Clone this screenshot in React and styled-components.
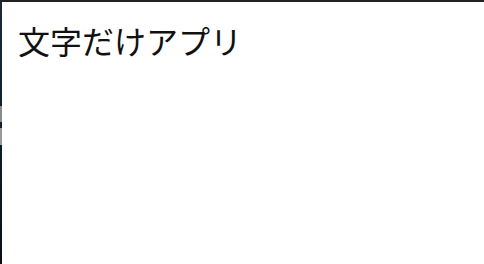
import React from "react";
import styled, { createGlobalStyle } from "styled-components";

const Global = createGlobalStyle`
  html, body { margin: 0; padding: 0; height: 100%; }
  body {
    background:
      linear-gradient(to bottom,
        transparent 0, transparent 106px,
        #8a8a8a 106px, #8a8a8a 122px,
        transparent 122px, transparent 128px,
        #9a9a9a 128px, #9a9a9a 145px,
        transparent 145px),
      linear-gradient(to bottom, #1c2a36 0%, #0d1f2e 50%, #0a0f14 100%);
    background-repeat: no-repeat;
    background-size: 2px 100%, 100% 100%;
    overflow: hidden;
  }
  #root { height: 100%; }
`;

const Desktop = styled.div`
  height: 100vh;
  box-sizing: border-box;
  padding: 2px 0 0 2px;
  display: flex;
  flex-direction: column;
  background: linear-gradient(#222, #222) top / 100% 2px no-repeat;
`;

const Window = styled.main`
  flex: 1;
  background: #ffffff;
  padding: 15px 16px;
`;

const Title = styled.h1`
  margin: 0;
  font-family: "Noto Sans CJK JP", "Noto Sans", sans-serif;
  font-weight: 400;
  font-size: 32px;
  line-height: 46px;
  color: #111;
`;

export default function App() {
  return (
    <>
      <Global />
      <Desktop>
        <Window>
          <Title>文字だけアプリ</Title>
        </Window>
      </Desktop>
    </>
  );
}
